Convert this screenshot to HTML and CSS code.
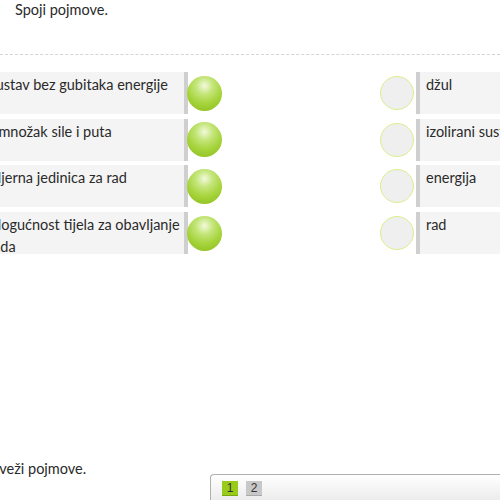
FILE: index.html
```html
<!DOCTYPE html>
<html>
<head>
<meta charset="utf-8">
<link rel="stylesheet" href="styles.css">
</head>
<body>
<div class="page">
  <div class="header"><p class="title">Spoji pojmove.</p></div>
  <div class="match">
    <div class="col left">
      <div class="row"><div class="box">Sustav bez gubitaka energije</div><div class="ball"></div></div>
      <div class="row"><div class="box">Umnožak sile i puta</div><div class="ball"></div></div>
      <div class="row"><div class="box">Mjerna jedinica za rad</div><div class="ball"></div></div>
      <div class="row"><div class="box">Mogućnost tijela za obavljanje rada</div><div class="ball"></div></div>
    </div>
    <div class="col right">
      <div class="row"><div class="ring"></div><div class="box">džul</div></div>
      <div class="row"><div class="ring"></div><div class="box">izolirani sustav</div></div>
      <div class="row"><div class="ring"></div><div class="box">energija</div></div>
      <div class="row"><div class="ring"></div><div class="box">rad</div></div>
    </div>
  </div>
  <div class="footer">
    <p class="hint">Poveži pojmove.</p>
    <div class="pager">
      <span class="pg active">1</span>
      <span class="pg">2</span>
    </div>
  </div>
</div>
</body>
</html>
```
FILE: styles.css
```css
html, body {
  margin: 0;
  padding: 0;
  background: #fff;
}
body {
  font-family: "Lato", "Open Sans", sans-serif;
  color: #2a2a2a;
  overflow: hidden;
}
.page {
  height: 500px;
  display: flex;
  flex-direction: column;
}
.header {
  height: 54px;
  border-bottom: 1px dashed #d4d4d4;
  padding-left: 15px;
}
.title {
  margin: 0;
  font-size: 14.5px;
  line-height: 20px;
}
.match {
  margin-top: 17px;
  display: flex;
  justify-content: space-between;
}
.col {
  display: flex;
  flex-direction: column;
  gap: 4.7px;
}
.row {
  display: flex;
  align-items: center;
  height: 42px;
}
.left {
  margin-left: -12px;
}
.left .box {
  width: 200px;
  height: 42px;
  box-sizing: border-box;
  background: #f4f4f4;
  border-right: 4px solid #cfcfcf;
  padding: 2px 0 0 0;
  font-size: 14.5px;
  line-height: 22px;
}
.ball {
  width: 35px;
  height: 35px;
  margin-left: -1px;
  border-radius: 50%;
  background: radial-gradient(circle at 50% 28%, #f2fadc 0%, #c4e57a 28%, #a6d43c 58%, #93c426 85%, #86b71d 100%);
}
.right .box {
  width: 84px;
  height: 42px;
  box-sizing: border-box;
  background: #f4f4f4;
  border-left: 4px solid #cfcfcf;
  padding: 2px 0 0 6px;
  font-size: 14.5px;
  line-height: 22px;
  white-space: nowrap;
  overflow: hidden;
  margin-left: 2px;
}
.ring {
  width: 32px;
  height: 32px;
  border-radius: 50%;
  border: 1px solid #d8ef8c;
  background: #efefef;
}
.footer {
  margin-top: auto;
  display: flex;
  align-items: flex-end;
}
.hint {
  margin: 0 0 21px -17px;
  font-size: 14.5px;
  line-height: 20px;
  width: 227px;
  flex: none;
}
.pager {
  flex: 1;
  height: 26px;
  box-sizing: border-box;
  border: 1px solid #b0b0b0;
  border-right: none;
  border-bottom: none;
  border-top-left-radius: 4px;
  background: linear-gradient(#ffffff, #ececec);
  display: flex;
  gap: 8px;
  padding: 6px 0 0 11px;
}
.pg {
  width: 16px;
  height: 14px;
  font-family: "Liberation Sans", Arial, sans-serif;
  font-size: 12px;
  line-height: 14px;
  text-align: center;
  color: #333;
  background: #c8c8c8;
  box-shadow: 0 1px 0 #aaa;
}
.pg.active {
  background: #99cc1a;
  box-shadow: 0 1px 0 #7aa810;
}
```
